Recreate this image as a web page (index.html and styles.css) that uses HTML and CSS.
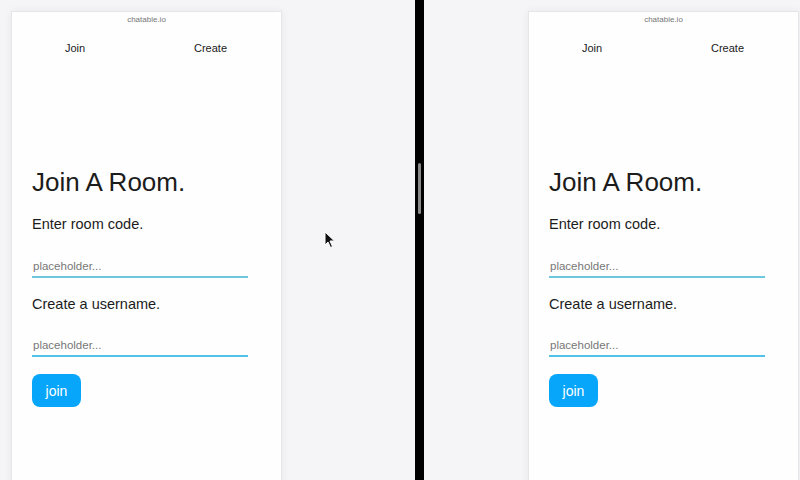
FILE: index.html
```html
<!DOCTYPE html>
<html>
<head>
<meta charset="utf-8">
<link rel="stylesheet" href="styles.css">
</head>
<body>
<div class="screen">
  <section class="pane pane-left">
    <div class="card">
      <div class="site">chatable.io</div>
      <nav class="nav"><span>Join</span><span>Create</span></nav>
      <h1 class="title">Join A Room.</h1>
      <p class="label label-code">Enter room code.</p>
      <input class="field field-code" type="text" placeholder="placeholder...">
      <p class="label label-user">Create a username.</p>
      <input class="field field-user" type="text" placeholder="placeholder...">
      <button class="btn">join</button>
    </div>
    <svg class="cursor" width="12" height="18" viewBox="0 0 12 18"><path d="M1 1 L1 14 L4 11 L6.5 16.5 L8.5 15.5 L6 10 L10.5 10 Z" fill="#111" stroke="#fff" stroke-width="1"/></svg>
  </section>
  <div class="divider"><div class="thumb"></div></div>
  <section class="pane pane-right">
    <div class="card">
      <div class="site">chatable.io</div>
      <nav class="nav"><span>Join</span><span>Create</span></nav>
      <h1 class="title">Join A Room.</h1>
      <p class="label label-code">Enter room code.</p>
      <input class="field field-code" type="text" placeholder="placeholder...">
      <p class="label label-user">Create a username.</p>
      <input class="field field-user" type="text" placeholder="placeholder...">
      <button class="btn">join</button>
    </div>
  </section>
</div>
</body>
</html>
```
FILE: styles.css
```css
* { box-sizing: border-box; }
html, body { margin: 0; padding: 0; }
body {
  width: 800px;
  height: 480px;
  overflow: hidden;
  font-family: "Liberation Sans", Arial, sans-serif;
  background: #f5f5f7;
}
.screen {
  display: flex;
  height: 480px;
}
.pane {
  position: relative;
  height: 480px;
  background: #f5f5f7;
  padding-top: 11px;
  overflow: hidden;
}
.pane-left { width: 415px; padding-left: 11px; }
.pane-right { flex: 1; padding-left: 104px; }
.divider {
  width: 9px;
  background: #000;
  padding-top: 163px;
  display: flex;
  justify-content: center;
}
.thumb {
  width: 3px;
  height: 51px;
  border-radius: 2px;
  background: #8a8a8a;
}
.card {
  width: 271px;
  height: 480px;
  background: #fefefe;
  border: 1px solid #e6e6e8;
  box-shadow: 0 0 8px rgba(0,0,0,0.06);
  padding: 3px 0 0 20px;
  color: #1e1e1e;
}
.site {
  font-size: 8px;
  line-height: 10px;
  color: #777;
  text-align: center;
  padding-right: 20px;
}
.nav {
  margin-top: 16px;
  display: grid;
  grid-template-columns: 129px auto;
  padding-left: 33px;
  font-size: 11px;
  line-height: 14px;
  color: #1a1a1a;
}
.title {
  margin: 112px 0 0;
  font-size: 26px;
  line-height: 30px;
  font-weight: normal;
  color: #1c1c1c;
}
.label {
  margin: 18px 0 0;
  font-size: 14.5px;
  line-height: 18px;
  color: #1c1c1c;
}
.field {
  display: block;
  width: 216px;
  height: 22px;
  margin-top: 23px;
  padding: 0 1px;
  border: none;
  border-bottom: 2px solid #6cc6dc;
  background: transparent;
  font-family: "Liberation Sans", Arial, sans-serif;
  font-size: 11.5px;
  outline: none;
}
.field::placeholder { color: #777; }
.label-user { margin-top: 17px; }
.field-user { margin-top: 22px; border-bottom: 2px solid #52c2e8; }
.btn {
  display: block;
  margin-top: 17px;
  width: 49px;
  height: 33px;
  border: none;
  border-radius: 8px;
  background: #08a6fb;
  color: #fff;
  font-family: "Liberation Sans", Arial, sans-serif;
  font-size: 14px;
  padding: 0;
}
.cursor {
  position: absolute;
  left: 324px;
  top: 231px;
}
```
